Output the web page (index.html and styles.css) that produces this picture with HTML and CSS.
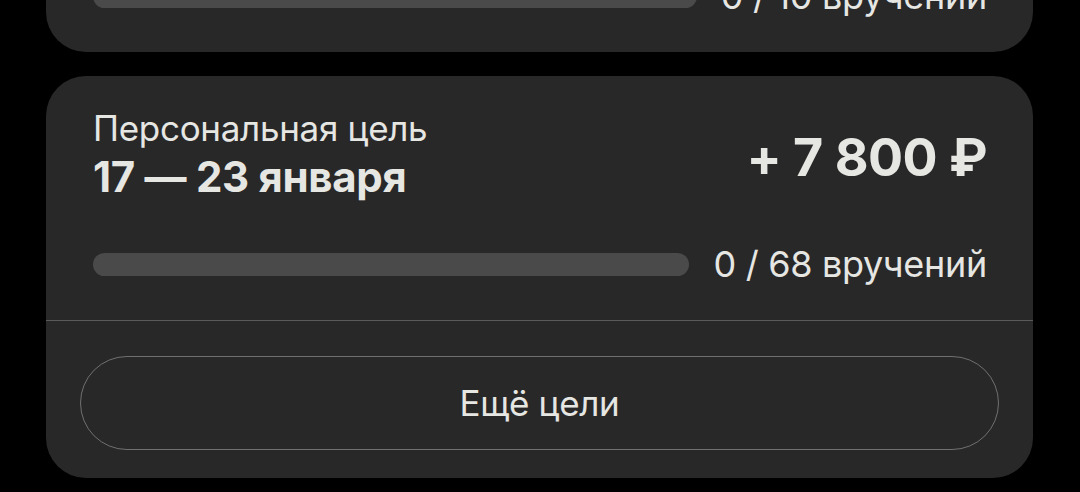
FILE: index.html
```html
<!DOCTYPE html>
<html>
<head>
    <meta charset="UTF-8">
    <meta name="viewport" content="width=device-width, initial-scale=1.0">
    <link rel="stylesheet" href="styles.css">
</head>
<body>
    <div class="goals">
        <div class="card card-prev">
            <div class="card-body">
                <div class="card-head">
                    <div class="card-title">
                        <div class="label">Персональная цель</div>
                        <div class="dates">10 — 16 января</div>
                    </div>
                    <div class="amount">+ 1 500 ₽</div>
                </div>
                <div class="progress-row">
                    <div class="bar"><div class="bar-fill" style="width: 0%"></div></div>
                    <div class="count">0 / 10 вручений</div>
                </div>
            </div>
        </div>

        <div class="card">
            <div class="card-body">
                <div class="card-head">
                    <div class="card-title">
                        <div class="label">Персональная цель</div>
                        <div class="dates">17 — 23 января</div>
                    </div>
                    <div class="amount">+ 7 800 ₽</div>
                </div>
                <div class="progress-row">
                    <div class="bar"><div class="bar-fill" style="width: 0%"></div></div>
                    <div class="count">0 / 68 вручений</div>
                </div>
            </div>
            <div class="card-foot">
                <button type="button" class="more-btn">Ещё цели</button>
            </div>
        </div>
    </div>
</body>
</html>
```

FILE: styles.css
```css
* {
    box-sizing: border-box;
}

body {
    margin: 0;
    background-color: #000;
    font-family: Inter, "Noto Sans", sans-serif;
    color: #e6e6e3;
    overflow: hidden;
}

.goals {
    display: flex;
    flex-direction: column;
    gap: 24px;
    padding: 0 47px 0 46px;
}

.card {
    background-color: #282828;
    border-radius: 40px;
}

.card-prev {
    margin-top: -192px;
}

.card-body {
    padding: 30px 46px 36px 47px;
    height: 244px;
    display: flex;
    flex-direction: column;
    justify-content: space-between;
}

.card-head {
    display: flex;
    justify-content: space-between;
    align-items: flex-start;
}

.label {
    font-size: 35px;
    line-height: 44px;
    letter-spacing: -0.3px;
}

.dates {
    font-size: 42px;
    font-weight: 700;
    line-height: 50px;
    margin-top: 2px;
    letter-spacing: -0.3px;
}

.amount {
    font-size: 52px;
    font-weight: 700;
    line-height: 60px;
    margin-top: 22px;
    letter-spacing: -0.5px;
}

.progress-row {
    display: flex;
    align-items: center;
    gap: 24px;
}

.bar {
    flex: 1;
    height: 23px;
    border-radius: 12px;
    background-color: #4a4a4a;
    overflow: hidden;
}

.bar-fill {
    height: 100%;
    background-color: #e6e6e3;
}

.count {
    font-size: 36px;
    line-height: 40px;
    letter-spacing: -0.3px;
}

.card-foot {
    border-top: 1px solid #5a5a5a;
    padding: 35px 34px 28px 34px;
}

.more-btn {
    display: block;
    width: 100%;
    height: 94px;
    background: transparent;
    border: 1.5px solid #707070;
    border-radius: 47px;
    color: #e6e6e3;
    font-family: inherit;
    font-size: 35px;
    letter-spacing: -0.3px;
    cursor: pointer;
}
```
